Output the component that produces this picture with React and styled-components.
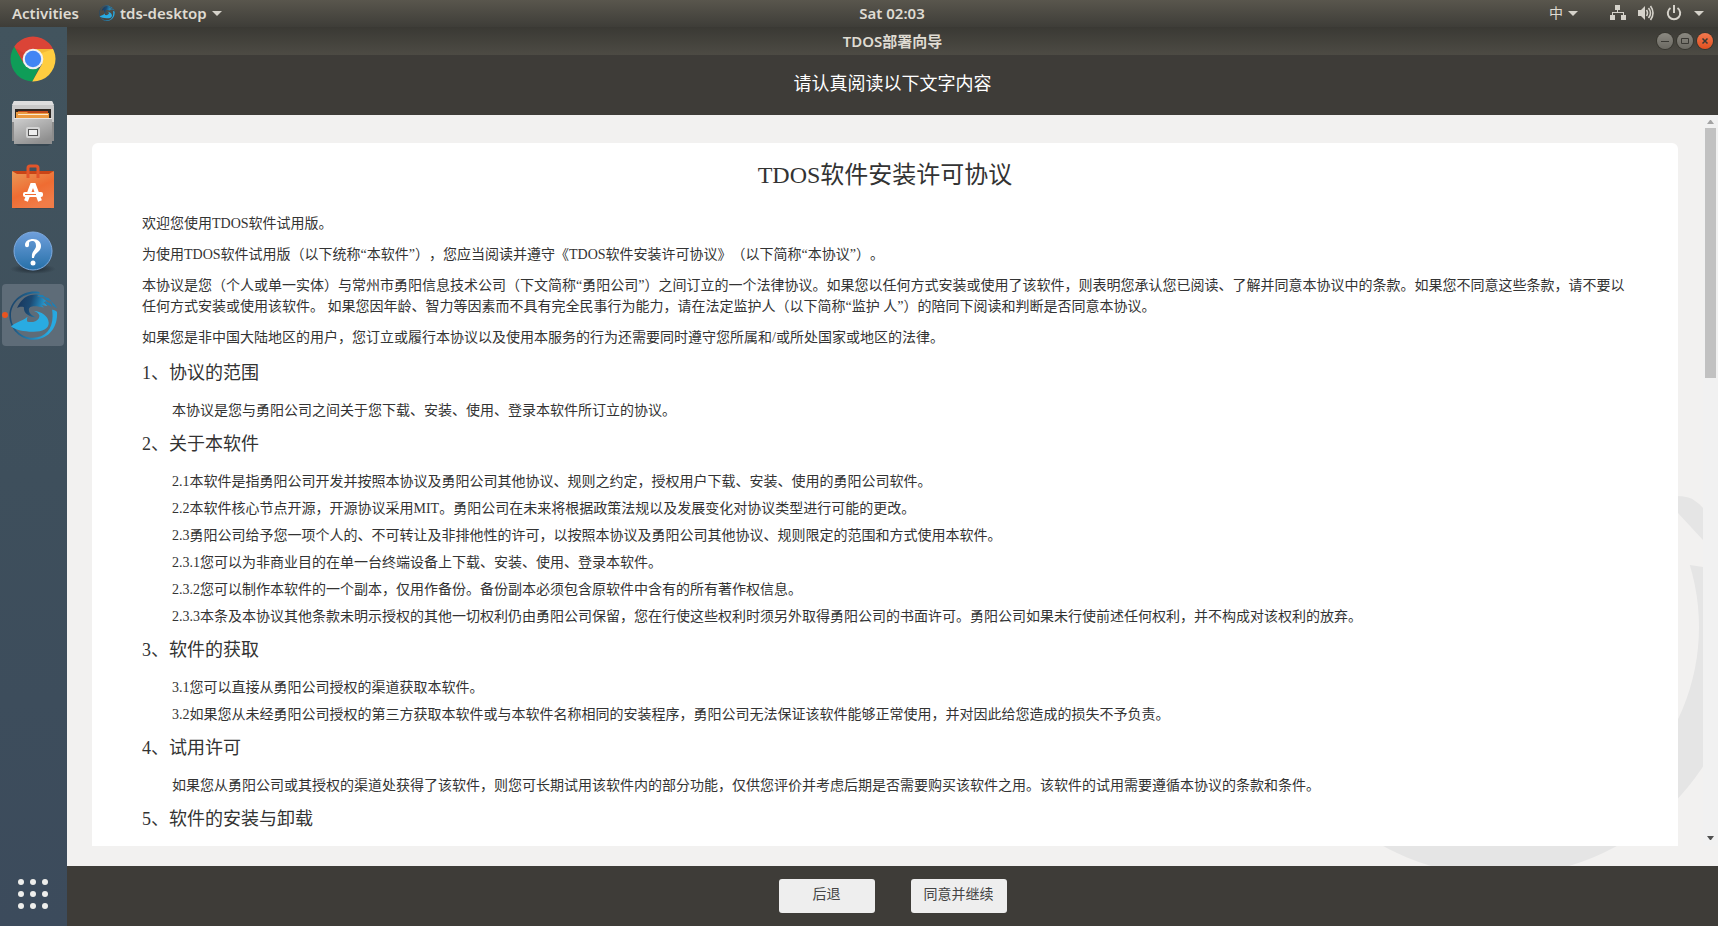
import React from "react";
import styled, { createGlobalStyle } from "styled-components";

const GlobalStyle = createGlobalStyle`
  * { box-sizing: border-box; }
  html, body, #root { height: 100%; margin: 0; }
  body { overflow: hidden; text-spacing-trim: space-all; }
  button { border: 0; padding: 0; background: none; font: inherit; color: inherit; cursor: pointer; }
  svg { display: block; flex: none; }
`;

const uiFont = `"Noto Sans", "Noto Sans CJK SC", sans-serif`;
const docFont = `"Liberation Serif", "Noto Sans CJK SC", serif`;

const Desktop = styled.div`
  height: 100vh;
  display: flex;
  flex-direction: column;
  font-family: ${uiFont};
`;

const TopBar = styled.header`
  height: 27px;
  flex: none;
  display: flex;
  align-items: center;
  padding: 0 14px 1px 12px;
  background: linear-gradient(#59564d, #3e3d38);
  color: #dfdbd2;
  font-size: 15px;
  font-weight: 600;
  line-height: 20px;
`;

const BarGroup = styled.div`
  flex: 1 1 0;
  display: flex;
  align-items: center;
  justify-content: ${(p) => (p.$end ? "flex-end" : "flex-start")};
  gap: ${(p) => (p.$end ? "12px" : "20px")};
`;

const BarButton = styled.button`
  display: flex;
  align-items: center;
  gap: 5px;
  margin-right: ${(p) => p.$gapAfter || 0}px;
`;

const InputMode = styled(BarButton)`
  font-size: 14px;
  font-weight: 400;
`;

const Clock = styled.button`
  padding-left: 68px;
`;

const Workspace = styled.div`
  flex: 1;
  min-height: 0;
  display: flex;
`;

const Dock = styled.nav`
  width: 67px;
  flex: none;
  display: flex;
  flex-direction: column;
  background: linear-gradient(#42545e, #3e4f5c 50%, #3c4b5c);
`;

const DockItem = styled.button`
  width: 66px;
  height: 64px;
  position: relative;
  display: flex;
  align-items: center;
  justify-content: center;
  margin-top: ${(p) => (p.$last ? "auto" : 0)};
`;

const ActiveTile = styled.span`
  width: 62px;
  height: 62px;
  border-radius: 4px;
  background: #5e6c78;
  display: flex;
  align-items: center;
  justify-content: center;
`;

const RunningDot = styled.span`
  position: absolute;
  left: 2px;
  top: 29px;
  width: 6px;
  height: 6px;
  border-radius: 50%;
  background: #e95420;
`;

const Window = styled.section`
  flex: 1;
  min-width: 0;
  display: flex;
  flex-direction: column;
`;

const TitleBar = styled.div`
  height: 28px;
  flex: none;
  display: flex;
  align-items: center;
  padding: 0 5px;
  background: linear-gradient(#3a3934, #4d4b44);
  color: #dfdbd2;
`;

const WindowTitle = styled.h1`
  flex: 1;
  margin: 0;
  padding-left: 56px;
  text-align: center;
  font-size: 15px;
  line-height: 20px;
  font-weight: 600;
`;

const Controls = styled.div`
  display: flex;
  gap: 4px;
`;

const Control = styled.button`
  width: 16px;
  height: 16px;
  border-radius: 50%;
  color: #3a3934;
  background: ${(p) =>
    p.$close ? "linear-gradient(#f2794f, #e2501f)" : "linear-gradient(#8b8981, #6b6962)"};
  box-shadow: 0 0 0 1px #37362f;
`;

const Banner = styled.div`
  height: 60px;
  flex: none;
  padding-top: 16px;
  background: #3e3c38;
  color: #fff;
  text-align: center;
  font-family: ${docFont};
  font-size: 18px;
  line-height: 27px;
`;

const Main = styled.main`
  flex: 1;
  min-height: 0;
  position: relative;
  display: flex;
  padding-bottom: 20px;
  background: #f2f1f0;
`;

const Watermark = styled.svg`
  position: absolute;
  right: 15px;
  bottom: 0;
`;

const ScrollArea = styled.div`
  flex: 1;
  min-width: 0;
  position: relative;
  overflow-y: auto;
  scrollbar-width: none;
  padding: 28px 25px 0;
`;

const Card = styled.article`
  min-height: 100%;
  padding: 14px 50px 16px;
  background: #fff;
  border-radius: 6px 6px 0 0;
  color: #333;
  font-family: ${docFont};
  font-size: 14px;
  line-height: 21px;
`;

const CardTitle = styled.h2`
  margin: 0 0 20px;
  text-align: center;
  font-size: 24px;
  line-height: 36px;
  font-weight: 400;
`;

const Paragraph = styled.p`
  margin: 0 0 10px;
`;

const Heading = styled.h3`
  margin: 0;
  padding: 2px 0 13px;
  font-size: 18px;
  line-height: 27px;
  font-weight: 400;
`;

const Clauses = styled.div`
  display: flex;
  flex-direction: column;
  gap: 6px;
  margin-bottom: 8px;
  padding-left: 30px;
`;

const Clause = styled.p`
  margin: 0;
`;

const Scrollbar = styled.div`
  width: 15px;
  flex: none;
  display: flex;
  flex-direction: column;
  align-items: center;
  background: #f1f1f1;
`;

const ScrollArrow = styled.button`
  width: 15px;
  height: ${(p) => (p.$down ? 17 : 13)}px;
  flex: none;
  display: flex;
  align-items: center;
  justify-content: center;
`;

const Track = styled.div`
  flex: 1;
  width: 11px;
`;

const Thumb = styled.div`
  height: 250px;
  background: #c1c1c1;
`;

const Footer = styled.footer`
  height: 60px;
  flex: none;
  display: flex;
  justify-content: center;
  align-items: center;
  gap: 36px;
  background: #3e3c38;
`;

const ActionButton = styled.button`
  width: 96px;
  height: 34px;
  padding-bottom: 4px;
  border-radius: 3px;
  background: #eee;
  color: #444;
  font-family: ${docFont};
  font-size: 14px;
  line-height: 21px;
`;

const Caret = () => (
  <svg width="10" height="5" viewBox="0 0 10 5"><path d="M0 0h10L5 5z" fill="#d5d2ca" /></svg>
);

const WaveLogo = ({ size }) => (
  <svg width={size} height={size} viewBox="0 0 148 148">
    <defs>
      <linearGradient id="waveRing" x1="0" y1="0" x2="1" y2="0.3">
        <stop offset="0" stopColor="#1c3a5c" />
        <stop offset="0.5" stopColor="#1f6c9c" />
        <stop offset="1" stopColor="#27a9e1" />
      </linearGradient>
      <linearGradient id="waveHead" x1="0" y1="0" x2="1" y2="0.2">
        <stop offset="0" stopColor="#183459" />
        <stop offset="0.5" stopColor="#1c4a73" />
        <stop offset="1" stopColor="#279fd6" />
      </linearGradient>
    </defs>
    <path
      fill="url(#waveRing)"
      d="M92 3C46-6 2 27 1 73c0 43 34 74 73 74 42 0 74-34 71-83-1-4-14-9-15-7 8 50-15 83-58 84C34 141 6 110 6 73 6 33 44 2 92 8z"
    />
    <path
      fill="url(#waveHead)"
      d="M24 52C33 31 46 17 66 12c12-3 24-2 30 2l-12 2 18 6 12 10-10 1 12 12-17-3 6 8c-22-5-46-8-45 8 1 11 12 17 24 22-22-1-41-12-39-31-8-3-15-1-21 3z"
    />
    <path fill="#1e7fb5" d="M84 11l18 1 9 8-17-2zM103 17l16 4 10 11-16-5zM108 30l16 7 6 11-18-9zM128 32l10 9 8 12-14-9z" />
    <path
      fill="#29abe2"
      d="M6 107c14-13 32-14 50-29-2 7-3 11 0 15 14 3 28-1 34-11 5-8 0-16-16-22 24 2 45 16 46 36 1 19-22 28-49 27-26-1-50-5-65-16z"
    />
  </svg>
);

const ChromeIcon = () => (
  <svg width="46" height="46" viewBox="0 0 46 46">
    <defs><clipPath id="chromeDisc"><circle cx="23" cy="23" r="22.5" /></clipPath></defs>
    <g clipPath="url(#chromeDisc)">
      <path fill="#db4437" d="M0 0h46v13H23L13 28 3 10z" />
      <path fill="#0f9d58" d="M4 10l10 18 9 5 6-1-7 14H0V10z" />
      <path fill="#ffcd40" d="M23 13h23v33H22l10-18z" />
      <path fill="#c23a2e" opacity=".5" d="M5 12l9 14 2-8z" />
      <path fill="#e8a62c" opacity=".5" d="M23 13h20l-11 4z" />
    </g>
    <circle cx="23" cy="23" r="10.3" fill="#f1f1f1" />
    <circle cx="23" cy="23" r="8.2" fill="#4285f4" />
  </svg>
);

const FilesIcon = () => (
  <svg width="44" height="46" viewBox="0 0 44 46">
    <defs>
      <linearGradient id="cabinet" x1="0" y1="0" x2="0.6" y2="1">
        <stop offset="0" stopColor="#cfcfcf" /><stop offset="1" stopColor="#8f8f8f" />
      </linearGradient>
    </defs>
    <path fill="#2c3943" opacity=".5" d="M3 43h38l-4 3H7z" />
    <path fill="#c9c9c9" d="M3 1h38l2 5v35H1V6z" />
    <path fill="#dedede" d="M3 1h38l2 4H1z" />
    <path fill="#8c8c8c" d="M1 22h2v19H1zM41 22h2v19h-2z" />
    <path fill="#2d2723" d="M4 9h36v10H4z" />
    <path fill="#c14b1c" d="M7 11h30v3H7z" />
    <path fill="#eb9a40" d="M5 12h11l1 1h21v6H5z" />
    <path fill="#fbe9cf" d="M7 14h30v1H7z" />
    <path fill="url(#cabinet)" d="M3 18h38v26H3z" />
    <path fill="#e6e6e6" d="M3 18h38v1H3z" />
    <rect x="15" y="27" width="14" height="11" rx="2" fill="#d4d4d4" />
    <rect x="17" y="29" width="10" height="7" fill="#555" />
    <rect x="18" y="30" width="8" height="5" fill="#eee" />
  </svg>
);

const SoftwareIcon = () => (
  <svg width="44" height="46" viewBox="0 0 44 46">
    <defs>
      <linearGradient id="bag" x1="0" y1="0" x2="0.5" y2="1">
        <stop offset="0" stopColor="#e99a58" /><stop offset="0.6" stopColor="#ef6c32" /><stop offset="1" stopColor="#f07c48" />
      </linearGradient>
    </defs>
    <path fill="#2c3943" opacity=".4" d="M2 43h40l-3 2H5z" />
    <path fill="#c94416" d="M2 7h40v6H2z" />
    <path fill="url(#bag)" d="M1 7l5 3h32l5-3v37H1z" />
    <path fill="none" stroke="#e2552a" strokeWidth="3" d="M17 14V4q0-2 2-2h6q2 0 2 2v10" />
    <path fill="none" stroke="#fff" strokeWidth="4" d="M15 37l6-16h2l6 16" />
    <rect x="12" y="28" width="20" height="5" rx="2" fill="#fff" />
    <path fill="#ef6c32" d="M14 30h11v1H14z" />
  </svg>
);

const HelpIcon = () => (
  <svg width="46" height="46" viewBox="0 0 46 46">
    <defs>
      <linearGradient id="help" x1="0" y1="0" x2="0" y2="1">
        <stop offset="0" stopColor="#6f9fdc" /><stop offset="1" stopColor="#2670a8" />
      </linearGradient>
      <radialGradient id="helpShade">
        <stop offset="0.4" stopColor="#2c3943" /><stop offset="1" stopColor="#2c3943" stopOpacity="0" />
      </radialGradient>
    </defs>
    <ellipse cx="23" cy="41" rx="23" ry="5" fill="url(#helpShade)" />
    <circle cx="23" cy="23" r="19" fill="url(#help)" stroke="#7fabe0" />
    <path
      fill="#fff"
      d="M15 17c0-4 4-6 8-6 5 0 8 3 8 7 0 6-6 6-7 12h-2c-1-7 4-8 4-12 0-3-1-5-4-5-2 0-3 1-3 2l0 2c0 3-4 3-4 0z"
    />
    <circle cx="23" cy="35" r="2.500" fill="#fff" />
  </svg>
);

const GridIcon = () => (
  <svg width="30" height="30" viewBox="0 0 30 30" fill="#eeeeec">
    {[3, 15, 27].map((y) => [3, 15, 27].map((x) => <circle key={`${x}-${y}`} cx={x} cy={y} r="3" />))}
  </svg>
);

const NetworkIcon = () => (
  <svg width="16" height="16" viewBox="0 0 16 16" fill="#d5d2ca">
    <path d="M5 0h5v5H8v2h6v3h2v5h-5v-5h2V8H3v2h2v5H0v-5h2V7h5V5H5z" />
  </svg>
);

const VolumeIcon = () => (
  <svg width="16" height="16" viewBox="0 0 16 16">
    <path fill="#d5d2ca" d="M0 5h3l4-4v14l-4-4H0z" />
    <path fill="none" stroke="#d5d2ca" strokeWidth="1.6" d="M8.500 5q2 3 0 6M10.500 3q4 5 0 10M12.500 1q5 7 0 14" />
  </svg>
);

const PowerIcon = () => (
  <svg width="16" height="16" viewBox="0 0 16 16" fill="none" stroke="#d5d2ca" strokeWidth="2">
    <path d="M8 0v8M4.500 3A6.200 6.200 0 1 0 11.500 3" />
  </svg>
);

const intro = [
  "欢迎您使用TDOS软件试用版。",
  "为使用TDOS软件试用版（以下统称“本软件”），您应当阅读并遵守《TDOS软件安装许可协议》（以下简称“本协议”）。",
  "本协议是您（个人或单一实体）与常州市勇阳信息技术公司（下文简称“勇阳公司”）之间订立的一个法律协议。如果您以任何方式安装或使用了该软件，则表明您承认您已阅读、了解并同意本协议中的条款。如果您不同意这些条款，请不要以任何方式安装或使用该软件。 如果您因年龄、智力等因素而不具有完全民事行为能力，请在法定监护人（以下简称“监护 人”）的陪同下阅读和判断是否同意本协议。",
  "如果您是非中国大陆地区的用户，您订立或履行本协议以及使用本服务的行为还需要同时遵守您所属和/或所处国家或地区的法律。",
];

const sections = [
  { title: "1、协议的范围", clauses: ["本协议是您与勇阳公司之间关于您下载、安装、使用、登录本软件所订立的协议。"] },
  {
    title: "2、关于本软件",
    clauses: [
      "2.1本软件是指勇阳公司开发并按照本协议及勇阳公司其他协议、规则之约定，授权用户下载、安装、使用的勇阳公司软件。",
      "2.2本软件核心节点开源，开源协议采用MIT。勇阳公司在未来将根据政策法规以及发展变化对协议类型进行可能的更改。",
      "2.3勇阳公司给予您一项个人的、不可转让及非排他性的许可，以按照本协议及勇阳公司其他协议、规则限定的范围和方式使用本软件。",
      "2.3.1您可以为非商业目的在单一台终端设备上下载、安装、使用、登录本软件。",
      "2.3.2您可以制作本软件的一个副本，仅用作备份。备份副本必须包含原软件中含有的所有著作权信息。",
      "2.3.3本条及本协议其他条款未明示授权的其他一切权利仍由勇阳公司保留，您在行使这些权利时须另外取得勇阳公司的书面许可。勇阳公司如果未行使前述任何权利，并不构成对该权利的放弃。",
    ],
  },
  {
    title: "3、软件的获取",
    clauses: [
      "3.1您可以直接从勇阳公司授权的渠道获取本软件。",
      "3.2如果您从未经勇阳公司授权的第三方获取本软件或与本软件名称相同的安装程序，勇阳公司无法保证该软件能够正常使用，并对因此给您造成的损失不予负责。",
    ],
  },
  {
    title: "4、试用许可",
    clauses: [
      "如果您从勇阳公司或其授权的渠道处获得了该软件，则您可长期试用该软件内的部分功能，仅供您评价并考虑后期是否需要购买该软件之用。该软件的试用需要遵循本协议的条款和条件。",
    ],
  },
  { title: "5、软件的安装与卸载", clauses: [] },
];

export default function App() {
  return (
    <Desktop>
      <GlobalStyle />
      <TopBar>
        <BarGroup>
          <BarButton>Activities</BarButton>
          <BarButton><WaveLogo size={16} />tds-desktop<Caret /></BarButton>
        </BarGroup>
        <Clock>Sat 02:03</Clock>
        <BarGroup $end>
          <InputMode $gapAfter={20}>中<Caret /></InputMode>
          <BarButton aria-label="Network"><NetworkIcon /></BarButton>
          <BarButton aria-label="Volume"><VolumeIcon /></BarButton>
          <BarButton aria-label="Power"><PowerIcon /></BarButton>
          <BarButton aria-label="System menu"><Caret /></BarButton>
        </BarGroup>
      </TopBar>
      <Workspace>
        <Dock>
          <DockItem aria-label="Chrome"><ChromeIcon /></DockItem>
          <DockItem aria-label="Files"><FilesIcon /></DockItem>
          <DockItem aria-label="Software"><SoftwareIcon /></DockItem>
          <DockItem aria-label="Help"><HelpIcon /></DockItem>
          <DockItem aria-label="tds-desktop">
            <ActiveTile><WaveLogo size={49} /></ActiveTile>
            <RunningDot />
          </DockItem>
          <DockItem $last aria-label="Show applications"><GridIcon /></DockItem>
        </Dock>
        <Window>
          <TitleBar>
            <WindowTitle>TDOS部署向导</WindowTitle>
            <Controls>
              <Control aria-label="Minimize">
                <svg width="16" height="16" viewBox="0 0 16 16"><path d="M4 8h8v1H4z" fill="currentColor" /></svg>
              </Control>
              <Control aria-label="Maximize">
                <svg width="16" height="16" viewBox="0 0 16 16"><path d="M4.500 5.500h7v5h-7z" fill="none" stroke="currentColor" /></svg>
              </Control>
              <Control $close aria-label="Close">
                <svg width="16" height="16" viewBox="0 0 16 16"><path d="M5.500 5.500l5 5m0-5l-5 5" stroke="currentColor" strokeWidth="1.5" /></svg>
              </Control>
            </Controls>
          </TitleBar>
          <Banner>请认真阅读以下文字内容</Banner>
          <Main>
            <Watermark width="333" height="386" viewBox="1370 480 333 386" fill="#e5e5e5" aria-hidden="true">
              <defs><clipPath id="crescent"><path d="M1690 565l13 2v299h-333V565z" /></clipPath></defs>
              <path
                clipPath="url(#crescent)"
                fillRule="evenodd"
                d="M1257 633a243 243 0 0 1 486 0a243 243 0 0 1-486 0zM1273 627a213 213 0 0 1 426 0a213 213 0 0 1-426 0z"
              />
              <path d="M1660 497q28-3 35 4 5 3 8 7v32l-25-27-18-16z" />
            </Watermark>
            <ScrollArea>
              <Card>
                <CardTitle>TDOS软件安装许可协议</CardTitle>
                {intro.map((text) => <Paragraph key={text}>{text}</Paragraph>)}
                {sections.map(({ title, clauses }) => (
                  <section key={title}>
                    <Heading>{title}</Heading>
                    {clauses.length > 0 && (
                      <Clauses>{clauses.map((text) => <Clause key={text}>{text}</Clause>)}</Clauses>
                    )}
                  </section>
                ))}
              </Card>
            </ScrollArea>
            <Scrollbar>
              <ScrollArrow aria-label="Scroll up">
                <svg width="7" height="4" viewBox="0 0 7 4"><path d="M0 4h7L4 0H3z" fill="#a3a3a3" /></svg>
              </ScrollArrow>
              <Track><Thumb /></Track>
              <ScrollArrow $down aria-label="Scroll down">
                <svg width="7" height="4" viewBox="0 0 7 4"><path d="M0 0h7L4 4H3z" fill="#505050" /></svg>
              </ScrollArrow>
            </Scrollbar>
          </Main>
          <Footer>
            <ActionButton>后退</ActionButton>
            <ActionButton>同意并继续</ActionButton>
          </Footer>
        </Window>
      </Workspace>
    </Desktop>
  );
}
